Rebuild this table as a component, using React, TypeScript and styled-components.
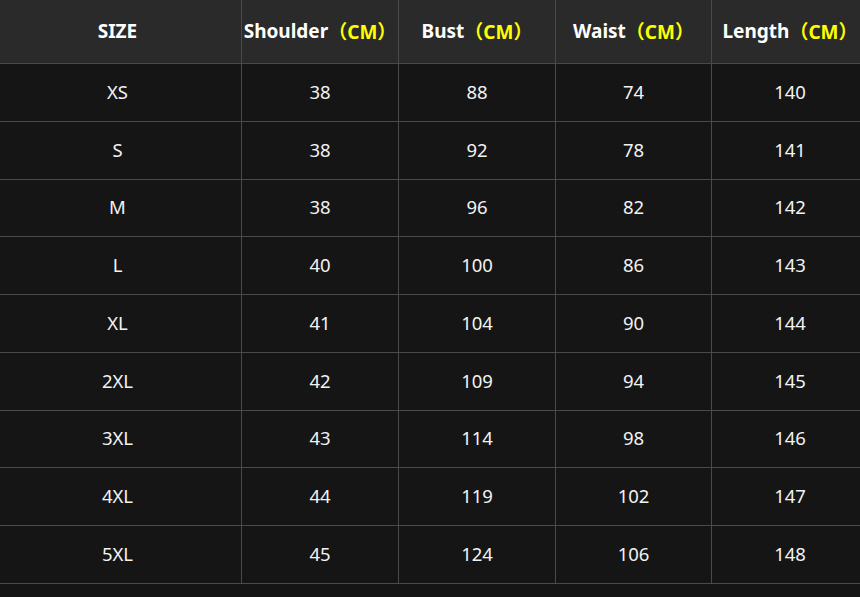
import React from "react";
import styled, { createGlobalStyle } from "styled-components";

const Global = createGlobalStyle`
  html, body { margin: 0; padding: 0; background: #151515; }
  body { width: 860px; height: 597px; overflow: hidden; }
`;

const Page = styled.div`
  width: 860px;
  height: 597px;
  overflow: hidden;
  background: #151515;
  font-family: "Noto Sans", "Noto Sans CJK SC", sans-serif;
`;

const Grid = styled.div`
  display: grid;
  width: 868px;
  grid-template-columns: 241px 156px 156px 155px 156px;
  grid-template-rows: 63px repeat(9, 56.78px);
  gap: 1px;
  background: #4a4a4a;
  padding-bottom: 1px;
`;

const HeadCell = styled.div<{ $first?: boolean }>`
  background: #2a2a2a;
  color: #ffffff;
  font-weight: 700;
  font-size: 19px;
  display: flex;
  align-items: center;
  justify-content: center;
  white-space: nowrap;
  padding-bottom: 2px;
  padding-right: ${(p) => (p.$first ? "6px" : "0")};
`;

const Unit = styled.span`
  color: #ffff00;
  font-family: "Noto Sans", "Noto Sans CJK SC", sans-serif;
  font-weight: 700;
`;

const Cell = styled.div<{ $first?: boolean }>`
  background: #151515;
  color: #f2f2f2;
  font-size: 18.5px;
  display: flex;
  align-items: center;
  justify-content: center;
  padding-bottom: 2px;
  padding-right: ${(p) => (p.$first ? "6px" : "0")};
`;

const headers = ["Shoulder", "Bust", "Waist", "Length"];

const rows: [string, number, number, number, number][] = [
  ["XS", 38, 88, 74, 140],
  ["S", 38, 92, 78, 141],
  ["M", 38, 96, 82, 142],
  ["L", 40, 100, 86, 143],
  ["XL", 41, 104, 90, 144],
  ["2XL", 42, 109, 94, 145],
  ["3XL", 43, 114, 98, 146],
  ["4XL", 44, 119, 102, 147],
  ["5XL", 45, 124, 106, 148],
];

export default function App() {
  return (
    <Page>
      <Global />
      <Grid>
        <HeadCell $first>SIZE</HeadCell>
        {headers.map((h) => (
          <HeadCell key={h}>
            {h}
            <Unit>（CM）</Unit>
          </HeadCell>
        ))}
        {rows.map((r) =>
          r.map((v, i) => (
            <Cell key={r[0] + "-" + i} $first={i === 0}>
              {v}
            </Cell>
          ))
        )}
      </Grid>
    </Page>
  );
}
